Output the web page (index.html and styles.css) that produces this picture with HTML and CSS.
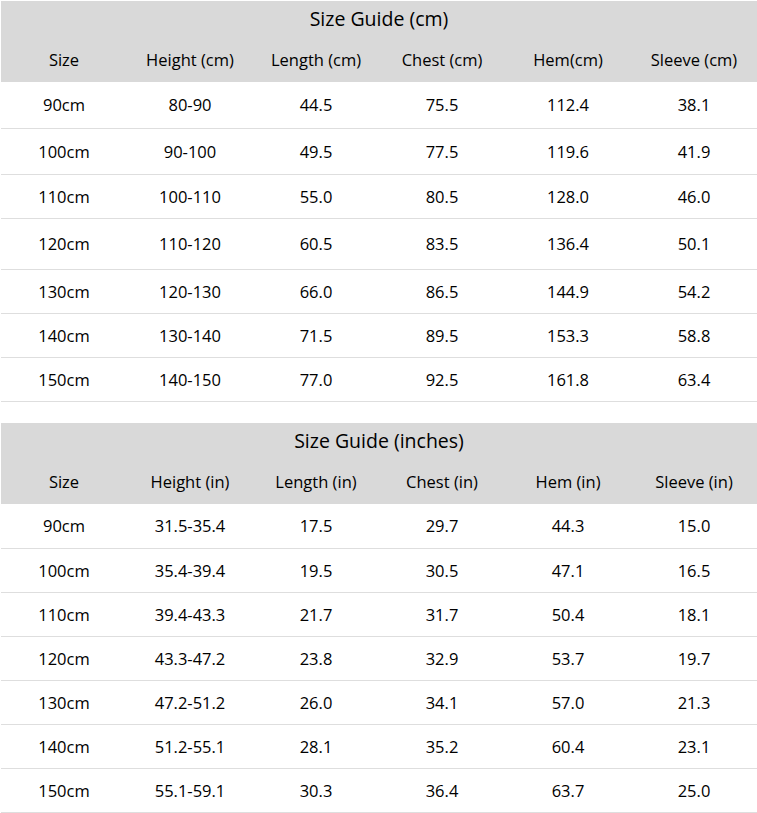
FILE: index.html
```html
<!DOCTYPE html>
<html>
<head>
<meta charset="utf-8">
<link rel="stylesheet" href="styles.css">
</head>
<body>
<div class="page">
<table class="guide">
  <thead>
    <tr class="title-row"><th colspan="6">Size Guide (cm)</th></tr>
    <tr class="head-row"><th>Size</th><th>Height (cm)</th><th>Length (cm)</th><th>Chest (cm)</th><th>Hem(cm)</th><th>Sleeve (cm)</th></tr>
  </thead>
  <tbody>
    <tr class="r46"><td>90cm</td><td>80-90</td><td>44.5</td><td>75.5</td><td>112.4</td><td>38.1</td></tr>
    <tr class="r45"><td>100cm</td><td>90-100</td><td>49.5</td><td>77.5</td><td>119.6</td><td>41.9</td></tr>
    <tr class="r43"><td>110cm</td><td>100-110</td><td>55.0</td><td>80.5</td><td>128.0</td><td>46.0</td></tr>
    <tr class="r50"><td>120cm</td><td>110-120</td><td>60.5</td><td>83.5</td><td>136.4</td><td>50.1</td></tr>
    <tr class="r43"><td>130cm</td><td>120-130</td><td>66.0</td><td>86.5</td><td>144.9</td><td>54.2</td></tr>
    <tr class="r43"><td>140cm</td><td>130-140</td><td>71.5</td><td>89.5</td><td>153.3</td><td>58.8</td></tr>
    <tr class="r43"><td>150cm</td><td>140-150</td><td>77.0</td><td>92.5</td><td>161.8</td><td>63.4</td></tr>
  </tbody>
</table>
<table class="guide second">
  <thead>
    <tr class="title-row"><th colspan="6">Size Guide (inches)</th></tr>
    <tr class="head-row"><th>Size</th><th>Height (in)</th><th>Length (in)</th><th>Chest (in)</th><th>Hem (in)</th><th>Sleeve (in)</th></tr>
  </thead>
  <tbody>
    <tr class="r44"><td>90cm</td><td>31.5-35.4</td><td>17.5</td><td>29.7</td><td>44.3</td><td>15.0</td></tr>
    <tr class="r43"><td>100cm</td><td>35.4-39.4</td><td>19.5</td><td>30.5</td><td>47.1</td><td>16.5</td></tr>
    <tr class="r43"><td>110cm</td><td>39.4-43.3</td><td>21.7</td><td>31.7</td><td>50.4</td><td>18.1</td></tr>
    <tr class="r43"><td>120cm</td><td>43.3-47.2</td><td>23.8</td><td>32.9</td><td>53.7</td><td>19.7</td></tr>
    <tr class="r43"><td>130cm</td><td>47.2-51.2</td><td>26.0</td><td>34.1</td><td>57.0</td><td>21.3</td></tr>
    <tr class="r43"><td>140cm</td><td>51.2-55.1</td><td>28.1</td><td>35.2</td><td>60.4</td><td>23.1</td></tr>
    <tr class="r43"><td>150cm</td><td>55.1-59.1</td><td>30.3</td><td>36.4</td><td>63.7</td><td>25.0</td></tr>
  </tbody>
</table>
</div>
</body>
</html>
```

FILE: styles.css
```css
html, body {
  margin: 0;
  padding: 0;
  background: #ffffff;
}
.page {
  padding: 1px 0 0 1px;
  font-family: "Open Sans", "Noto Sans", sans-serif;
  color: #000000;
}
.guide {
  width: 756px;
  table-layout: fixed;
  border-collapse: collapse;
  border-spacing: 0;
}
.guide.second {
  margin-top: 21px;
}
.guide th, .guide td {
  width: 126px;
  padding: 0;
  text-align: center;
  vertical-align: middle;
  font-weight: normal;
  font-size: 16.5px;
  line-height: 20px;
}
.title-row th {
  background: #d9d9d9;
  height: 36px;
  font-size: 19.5px;
  line-height: 22px;
}
.head-row th {
  background: #d9d9d9;
  height: 45px;
}
.guide tbody tr {
  border-bottom: 1px solid #dedede;
}
.r46 td { height: 46px; }
.r45 td { height: 45px; }
.r44 td { height: 44px; }
.r43 td { height: 43px; }
.r50 td { height: 50px; }
```
